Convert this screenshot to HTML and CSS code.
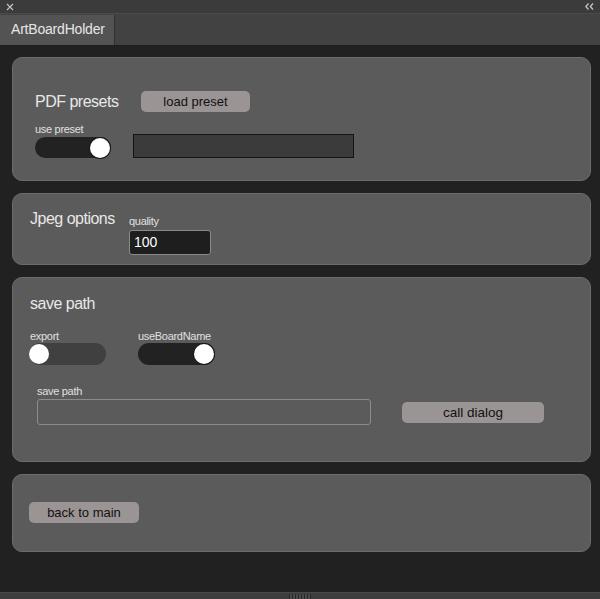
FILE: index.html
```html
<!DOCTYPE html>
<html>
<head>
<meta charset="utf-8">
<link rel="stylesheet" href="styles.css">
</head>
<body>
<div class="app">
  <div class="titlebar">
    <svg class="close" width="8" height="8" viewBox="0 0 8 8"><path d="M1 1L7 7M7 1L1 7" stroke="#c4c4c4" stroke-width="1.2" fill="none"/></svg>
    <svg class="collapse" width="9" height="7" viewBox="0 0 9 7"><path d="M3.5 0.5L0.8 3.5L3.5 6.5M8 0.5L5.3 3.5L8 6.5" stroke="#c4c4c4" stroke-width="1.3" fill="none"/></svg>
  </div>
  <div class="tabbar">
    <div class="tab">ArtBoardHolder</div>
  </div>
  <main class="content">
    <section class="panel panel-pdf">
      <div class="row row-center">
        <h2 class="title title-pdf">PDF presets</h2>
        <button class="btn btn-load">load preset</button>
      </div>
      <div class="row row-end row-preset">
        <div class="field">
          <span class="label">use preset</span>
          <div class="toggle toggle-on toggle-dark"><span class="knob"></span></div>
        </div>
        <div class="preset-box"></div>
      </div>
    </section>

    <section class="panel panel-jpeg">
      <div class="row row-start">
        <h2 class="title title-jpeg">Jpeg options</h2>
        <div class="field">
          <span class="label">quality</span>
          <div class="num-input">100</div>
        </div>
      </div>
    </section>

    <section class="panel panel-save">
      <h2 class="title">save path</h2>
      <div class="row toggles">
        <div class="field field-export">
          <span class="label">export</span>
          <div class="toggle toggle-off"><span class="knob"></span></div>
        </div>
        <div class="field">
          <span class="label">useBoardName</span>
          <div class="toggle toggle-on toggle-dark"><span class="knob"></span></div>
        </div>
      </div>
      <div class="row row-end path-row">
        <div class="field">
          <span class="label">save path</span>
          <div class="path-input"></div>
        </div>
        <button class="btn btn-dialog">call dialog</button>
      </div>
    </section>

    <section class="panel panel-back">
      <button class="btn btn-back">back to main</button>
    </section>
  </main>
  <div class="statusbar"><span class="grip"></span></div>
</div>
</body>
</html>
```
FILE: styles.css
```css
* { box-sizing: border-box; }
html, body { margin: 0; padding: 0; }
body {
  background: #212121;
  font-family: "Liberation Sans", Arial, sans-serif;
  color: #e4e4e4;
}
.app {
  width: 600px;
  height: 599px;
  display: flex;
  flex-direction: column;
}
.titlebar {
  height: 14px;
  background: #3b3b3b;
  border-bottom: 1px solid #4a4a4a;
  display: flex;
  justify-content: space-between;
  align-items: center;
  padding: 0 6px 0 6px;
}
.close { display: block; }
.collapse { display: block; }
.tabbar {
  height: 32px;
  background: #424242;
  border-bottom: 1px solid #1c1c1c;
  display: flex;
  align-items: flex-end;
}
.tab {
  width: 115px;
  height: 30px;
  background: #535353;
  border-right: 1px solid #333;
  font-size: 14px;
  letter-spacing: -0.2px;
  color: #e6e6e6;
  padding: 6px 0 0 11px;
  line-height: 17px;
}
.content {
  flex: 1;
  padding: 11px 9px 0 12px;
  display: flex;
  flex-direction: column;
  gap: 12px;
}
.panel {
  background: #5b5b5b;
  border: 1px solid #6c6c6c;
  border-radius: 10px;
}
.row { display: flex; }
.row-center { align-items: center; }
.row-end { align-items: flex-end; }
.row-start { align-items: flex-start; }

.title {
  margin: 0;
  font-weight: normal;
  font-size: 16px;
  letter-spacing: -0.5px;
  line-height: 20px;
  color: #e8e8e8;
}
.label {
  display: block;
  font-size: 11px;
  letter-spacing: -0.3px;
  line-height: 13px;
  color: #e0e0e0;
}
.field { display: flex; flex-direction: column; }

.btn {
  font-family: "Liberation Sans", Arial, sans-serif;
  font-size: 13px;
  color: #111;
  background: #9b9494;
  border: none;
  border-radius: 5px;
  height: 21px;
  padding: 0;
  line-height: 21px;
}

/* panel 1 */
.panel-pdf { padding: 33px 22px 22px 22px; height: 124px; }
.title-pdf { width: 106px; }
.btn-load { width: 109px; }
.row-preset { margin-top: 11px; }
.row-preset .label { margin-bottom: 1px; }
.preset-box {
  margin-left: 22px;
  width: 221px;
  height: 24px;
  background: #3b3b3b;
  border: 1px solid #141414;
}

.toggle {
  width: 77px;
  height: 22px;
  border-radius: 11px;
  display: flex;
  align-items: center;
  padding: 0 1px;
}
.toggle-dark { background: #222; }
.toggle-off { background: #404040; justify-content: flex-start; padding: 0; }
.toggle-on { justify-content: flex-end; }
.knob {
  width: 20px;
  height: 20px;
  border-radius: 50%;
  background: #fff;
  box-shadow: 0 0 0 1px #1a1a1a;
}
.toggle-off .knob { box-shadow: none; }
.panel-pdf .toggle { width: 76px; height: 21px; }

/* panel 2 */
.panel-jpeg { padding: 21px 17px 9px 17px; height: 72px; }
.title-jpeg { width: 99px; margin-top: -6px; }
.num-input {
  margin-top: 2px;
  width: 82px;
  height: 25px;
  background: #1e1e1e;
  border: 1px solid #8a8a8a;
  border-radius: 3px;
  color: #fff;
  font-size: 14px;
  line-height: 23px;
  padding-left: 4px;
}

/* panel 3 */
.panel-save { padding: 16px 17px 36px 17px; height: 185px; }
.toggles { margin-top: 16px; gap: 32px; }
.field-export .toggle { margin-left: -1px; }
.path-row { margin-top: 20px; padding-left: 7px; }
.path-row .label { margin-bottom: 1px; }
.path-input {
  width: 334px;
  height: 26px;
  border: 1px solid #8c8c8c;
  border-radius: 3px;
}
.btn-dialog { width: 142px; margin-left: 31px; margin-bottom: 2px; font-size: 13.5px; }

/* panel 4 */
.panel-back { padding: 27px 17px 28px 16px; height: 78px; }
.btn-back { width: 110px; }

.statusbar {
  height: 7px;
  background: #3d3d3d;
  border-top: 1px solid #4a4a4a;
  display: flex;
  justify-content: center;
}
.grip {
  width: 22px;
  height: 5px;
  margin-top: 1px;
  background: repeating-linear-gradient(90deg, #2a2a2a 0 1px, #4a4a4a 1px 3px);
}
```
